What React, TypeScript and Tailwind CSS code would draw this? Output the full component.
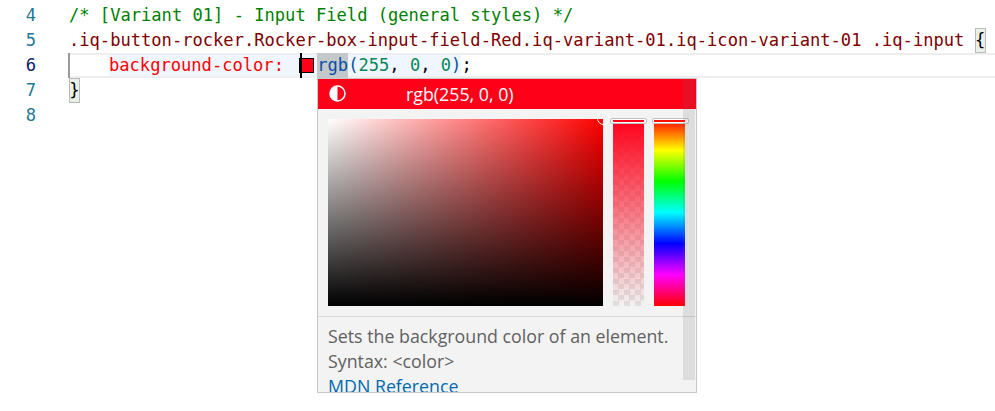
import React from 'react';

const numbers = [4, 5, 6, 7, 8];

function CodeLine({ n, active, children }: { n: number; active?: boolean; children?: React.ReactNode }) {
  return (
    <div className="flex h-[25px] items-center">
      <div className={`w-[36px] shrink-0 text-right ${active ? 'text-[#0b216f]' : 'text-[#237893]'}`}>{n}</div>
      <div
        className={`ml-[33px] flex h-[25px] flex-1 items-center whitespace-pre ${
          active ? 'relative border-y-2 border-[#eeeeee]' : ''
        }`}
      >
        {children}
      </div>
    </div>
  );
}

function Bracket({ children }: { children: React.ReactNode }) {
  return (
    <span className="flex h-[25px] w-[11px] items-center justify-center border border-[#b9b9b9] bg-[#e8f0e8] text-black">
      {children}
    </span>
  );
}

function ColorPopup() {
  return (
    <div className="absolute left-[317px] top-[78px] h-[315px] w-[380px] overflow-hidden border border-[#c8c8c8] bg-[#f3f3f3] font-['Open_Sans',sans-serif] text-[17.8px]">
      <div className="relative flex h-[30px] items-center bg-[#ff0019] pl-[88px] pt-[1px] text-white">
        <svg className="absolute left-[11px] top-[6px]" width="17" height="17" viewBox="0 0 17 17">
          <circle cx="8.5" cy="8.5" r="7.5" fill="none" stroke="#fff" strokeWidth="1.5" />
          <path d="M8.5 1 A7.5 7.5 0 0 0 8.5 16 Z" fill="#fff" />
        </svg>
        <span>rgb(255, 0, 0)</span>
      </div>
      <div className="relative flex gap-[10px] border-b border-[#d8d8d8] px-[10px] py-[10px]">
        <div className="relative h-[187px] w-[275px] bg-[linear-gradient(to_bottom,transparent,#000),linear-gradient(to_right,#fff,#f00)]" />
        <div className="relative h-[187px] w-[31px] bg-[linear-gradient(to_bottom,#ff0019,rgba(255,0,25,0)),repeating-conic-gradient(#e0e0e0_0_25%,#f2f2f2_0_50%)] [background-size:100%_100%,11px_11px]">
          <div className="absolute -left-[3px] -right-[3px] -top-[1px] h-[6px] rounded-[2px] border border-[#c0c0c0] shadow-[inset_0_0_0_1px_#fff]" />
        </div>
        <div className="relative h-[187px] w-[31px] bg-[linear-gradient(to_bottom,#f00,#ff0,#0f0,#0ff,#00f,#f0f,#f00)]">
          <div className="absolute -left-[2px] -right-[4px] -top-[1px] h-[6px] rounded-[2px] border border-[#c0c0c0] shadow-[inset_0_0_0_1px_#fff]" />
        </div>
        <div className="absolute left-[279px] top-[3px] h-[13px] w-[13px] rounded-full border border-white" />
      </div>
      <div className="px-[10px] pt-[7px] leading-[25px] text-[#616161]">
        <div>Sets the background color of an element.</div>
        <div>Syntax: &lt;color&gt;</div>
        <div className="text-[#006ab1]">MDN Reference</div>
      </div>
      <div className="absolute right-[1px] top-0 h-[301px] w-[12px] bg-[rgba(100,100,100,0.15)]" />
    </div>
  );
}

export default function App() {
  return (
    <div className="relative h-[411px] w-[995px] overflow-hidden bg-white font-['DejaVu_Sans_Mono',monospace] text-[17.1px] text-black">
      <div className="flex flex-col pt-[3px]">
        <CodeLine n={numbers[0]}>
          <span className="text-[#008000]">/* [Variant 01] - Input Field (general styles) */</span>
        </CodeLine>
        <CodeLine n={numbers[1]}>
          <span className="text-[#800000]">.iq-button-rocker.Rocker-box-input-field-Red.iq-variant-01.iq-icon-variant-01 .iq-input </span>
          <Bracket>{'{'}</Bracket>
        </CodeLine>
        <CodeLine n={numbers[2]} active>
          <span className="absolute -left-px -top-[2px] h-[25px] w-[2px] bg-[#9a9a9a]" />
          <span className="ml-[40px] flex h-[21px] items-center bg-[#f0f6ff]">
            <span className="text-[#ff0000]">background-color: </span>
            <span className="ml-[5px] h-[15px] w-[15px] border border-black bg-[#ff0019]" />
            <span className="w-[3px]" />
          </span>
          <span className="flex h-[25px] items-center bg-[#c4c8cb] text-[#0451a5]">rgb</span>
          <span className="flex h-[21px] items-center bg-[#f0f6ff]">
            <span className="text-[#0451a5]">(</span>
            <span className="text-[#098658]">255</span>
            <span>, </span>
            <span className="text-[#098658]">0</span>
            <span>, </span>
            <span className="text-[#098658]">0</span>
            <span className="text-[#0451a5]">)</span>
          </span>
          <span>;</span>
          <span className="absolute left-[231px] -top-[2px] h-[25px] w-[2px] bg-black" />
        </CodeLine>
        <CodeLine n={numbers[3]}>
          <Bracket>{'}'}</Bracket>
        </CodeLine>
        <CodeLine n={numbers[4]} />
      </div>
      <ColorPopup />
    </div>
  );
}
